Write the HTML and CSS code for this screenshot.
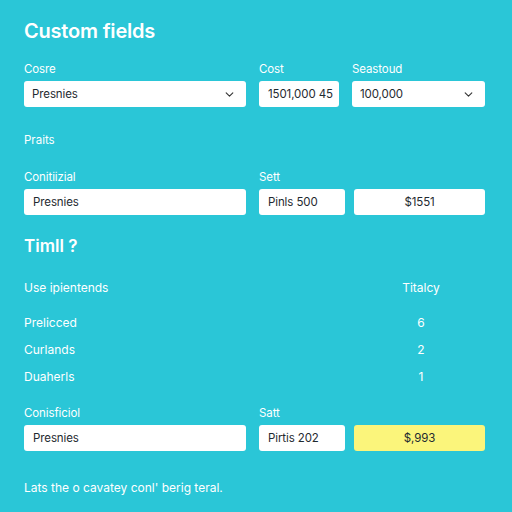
FILE: index.html
```html
<!DOCTYPE html>
<html lang="en">
<head>
    <meta charset="UTF-8">
    <meta name="viewport" content="width=device-width, initial-scale=1.0">
    <title>Custom fields</title>
    <link rel="stylesheet" href="styles.css">
</head>
<body>
    <div class="page">
        <h1>Custom fields</h1>

        <div class="row row-a">
            <div class="field">
                <label>Cosre</label>
                <div class="input select">
                    <span>Presnies</span>
                    <svg class="chev" viewBox="0 0 10 6" width="9" height="5"><path d="M1 1l4 4 4-4" fill="none" stroke="#333" stroke-width="1.3" stroke-linecap="round" stroke-linejoin="round"/></svg>
                </div>
            </div>
            <div class="field">
                <label>Cost</label>
                <div class="input"><span>1501,000 45</span></div>
            </div>
            <div class="field">
                <label>Seastoud</label>
                <div class="input select">
                    <span>100,000</span>
                    <svg class="chev" viewBox="0 0 10 6" width="9" height="5"><path d="M1 1l4 4 4-4" fill="none" stroke="#333" stroke-width="1.3" stroke-linecap="round" stroke-linejoin="round"/></svg>
                </div>
            </div>
        </div>

        <p class="section">Praits</p>

        <div class="row row-b">
            <div class="field">
                <label>Conitiizial</label>
                <div class="input"><span>Presnies</span></div>
            </div>
            <div class="field">
                <label>Sett</label>
                <div class="input"><span>Pinls 500</span></div>
            </div>
            <div class="field">
                <label>&nbsp;</label>
                <div class="input center"><span>$1551</span></div>
            </div>
        </div>

        <h2>Timll ?</h2>

        <div class="table">
            <div class="thead">
                <span>Use ipientends</span>
                <span class="num">Titalcy</span>
            </div>
            <div class="trow"><span>Prelicced</span><span class="num">6</span></div>
            <div class="trow"><span>Curlands</span><span class="num">2</span></div>
            <div class="trow"><span>Duaherls</span><span class="num">1</span></div>
        </div>

        <div class="row row-b row-c">
            <div class="field">
                <label>Conisficiol</label>
                <div class="input"><span>Presnies</span></div>
            </div>
            <div class="field">
                <label>Satt</label>
                <div class="input"><span>Pirtis 202</span></div>
            </div>
            <div class="field">
                <label>&nbsp;</label>
                <div class="input center highlight"><span>$,993</span></div>
            </div>
        </div>

        <p class="footer">Lats the o cavatey conl' berig teral.</p>
    </div>
</body>
</html>
```

FILE: styles.css
```css
:root {
    --bg: #2ac6d7;
    --text: #ffffff;
    --field: #ffffff;
    --field-text: #1f2a30;
    --yellow: #fbf57b;
}

* {
    margin: 0;
    padding: 0;
    box-sizing: border-box;
    font-family: 'Inter', 'Noto Sans', sans-serif;
}

body {
    background-color: var(--bg);
    color: var(--text);
    min-height: 100vh;
}

.page {
    padding: 18px 27px 0 24px;
}

h1 {
    font-size: 20px;
    font-weight: 600;
    line-height: 26px;
    letter-spacing: -0.2px;
}

.row {
    display: grid;
    column-gap: 13px;
}

.row-a {
    margin-top: 17px;
    grid-template-columns: 222px 80px 1fr;
}

.row-b {
    margin-top: 21px;
    grid-template-columns: 222px 86px 1fr;
    column-gap: 13px;
}

.row-b .field:last-child {
    margin-left: -4px;
}

.row-c {
    margin-top: 15px;
}

.field {
    display: flex;
    flex-direction: column;
    gap: 4px;
}

.field label {
    font-size: 11.5px;
    line-height: 16px;
    letter-spacing: -0.1px;
}

.input {
    height: 26px;
    background: var(--field);
    border-radius: 3px;
    display: flex;
    align-items: center;
    padding: 0 9px;
    color: var(--field-text);
    font-size: 11.5px;
    letter-spacing: -0.1px;
    white-space: nowrap;
    overflow: hidden;
}

.input.select {
    justify-content: space-between;
    padding-right: 12px;
    padding-left: 8px;
}

.input.center {
    justify-content: center;
}

.input.highlight {
    background: var(--yellow);
}

.section {
    margin-top: 25px;
    font-size: 11.5px;
    line-height: 16px;
}

h2 {
    margin-top: 20px;
    font-size: 17px;
    font-weight: 600;
    line-height: 22px;
}

.table {
    margin-top: 17px;
    padding-right: 19px;
}

.thead,
.trow {
    display: grid;
    grid-template-columns: 1fr 90px;
    height: 27px;
    line-height: 27px;
    font-size: 12px;
}

.thead {
    margin-bottom: 8px;
}

.num {
    text-align: center;
}

.footer {
    margin-top: 28px;
    font-size: 12px;
    line-height: 18px;
}
```
